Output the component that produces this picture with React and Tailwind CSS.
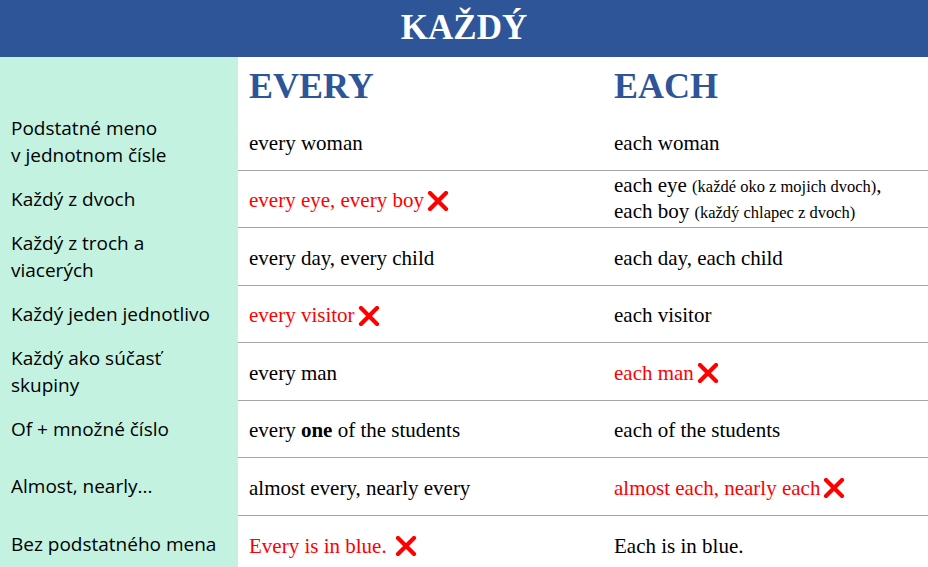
import React from 'react';

const serif = "font-['Liberation_Serif','Times_New_Roman',serif]";
const sans = "font-['Open_Sans','Noto_Sans',sans-serif]";

// Červený krížik pri nesprávnom použití
function Cross() {
  return (
    <svg width="22" height="20" viewBox="0 0 22 20" className="inline-block align-middle ml-[3px] -mt-[3px]">
      <path d="M3 2 L19 18 M19 2 L3 18" stroke="#ff0000" strokeWidth="4.2" strokeLinecap="round" />
    </svg>
  );
}

const rows = [
  {
    label: <>Podstatné meno<br />v jednotnom čísle</>,
    every: <>every woman</>,
    each: <>each woman</>,
  },
  {
    label: <>Každý z dvoch</>,
    every: <span className="text-[#ff0000]">every eye, every boy<Cross /></span>,
    each: (
      <div className="leading-[25px] -mt-[3px]">
        each eye <span className="text-[16.5px]">(každé oko z mojich dvoch)</span>,<br />
        each boy <span className="text-[16.5px]">(každý chlapec z dvoch)</span>
      </div>
    ),
  },
  {
    label: <>Každý z troch a<br />viacerých</>,
    every: <>every day, every child</>,
    each: <>each day, each child</>,
  },
  {
    label: <>Každý jeden jednotlivo</>,
    every: <span className="text-[#ff0000]">every visitor<Cross /></span>,
    each: <>each visitor</>,
  },
  {
    label: <>Každý ako súčasť<br />skupiny</>,
    every: <>every man</>,
    each: <span className="text-[#ff0000]">each man<Cross /></span>,
  },
  {
    label: <>Of + množné číslo</>,
    every: <>every <b>one</b> of the students</>,
    each: <>each of the students</>,
  },
  {
    label: <>Almost, nearly...</>,
    every: <>almost every, nearly every</>,
    each: <span className="text-[#ff0000]">almost each, nearly each<Cross /></span>,
  },
  {
    label: <>Bez podstatného mena</>,
    every: <span className="text-[#ff0000]">Every is in blue. <Cross /></span>,
    each: <>Each is in blue.</>,
  },
];

export default function App() {
  return (
    <div className="w-[928px] h-[567px] overflow-hidden bg-white">
      <div className={`h-[57px] bg-[#2e5597] flex items-center justify-center text-white text-[35px] font-bold ${serif}`}>
        KAŽDÝ
      </div>
      <div className="grid grid-cols-[238px_364px_1fr]">
        <div className="bg-[#c3f2e0] h-[56px]" />
        <div className={`h-[56px] pl-[11px] flex items-center text-[#2e5597] text-[36px] font-bold pt-[1px] ${serif}`}>EVERY</div>
        <div className={`h-[56px] pl-[12px] flex items-center text-[#2e5597] text-[36px] font-bold pt-[1px] ${serif}`}>EACH</div>
        {rows.map((r, i) => (
          <React.Fragment key={i}>
            <div className={`bg-[#c3f2e0] h-[57.5px] pl-[11px] flex items-center text-[19px] leading-[27px] text-black ${sans}`}>
              <div>{r.label}</div>
            </div>
            <div className={`h-[57.5px] pl-[11px] pt-[4px] flex items-center text-[21px] text-black ${serif} ${i < 7 ? 'border-b border-[#a6a6a6]' : ''}`}>
              <div>{r.every}</div>
            </div>
            <div className={`h-[57.5px] pl-[12px] pt-[4px] flex items-center text-[21px] text-black ${serif} ${i < 7 ? 'border-b border-[#a6a6a6]' : ''}`}>
              <div>{r.each}</div>
            </div>
          </React.Fragment>
        ))}
      </div>
    </div>
  );
}
